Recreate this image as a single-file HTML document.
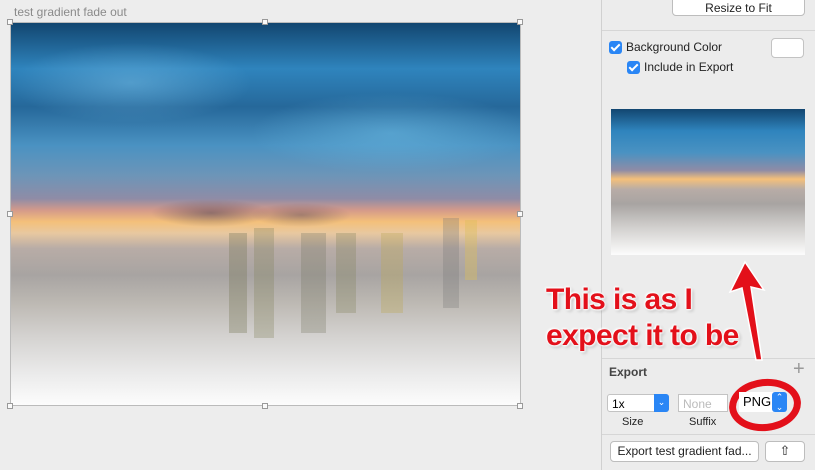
<!DOCTYPE html><html><head><style>
body{margin:0;width:815px;height:470px;overflow:hidden;background:#ededed;font-family:"Liberation Sans",sans-serif;position:relative}
.a{position:absolute}
.h{position:absolute;width:6px;height:6px;background:#fafafa;border:1px solid #999;box-sizing:border-box}
.cb{position:absolute;width:13px;height:13px;border-radius:3px;background:#2a86f5}
.cb:after{content:"";position:absolute;left:4px;top:1px;width:3px;height:7px;border:solid #fff;border-width:0 2px 2px 0;transform:rotate(45deg)}
.t{font-size:12px;color:#222}
.btn{position:absolute;background:#fff;border:1px solid #bdbdbd;border-radius:4px;box-sizing:border-box;font-size:12px;color:#222;text-align:center}
.red{position:absolute;color:#e3101a;font-weight:bold;font-size:30px;letter-spacing:-0.6px;text-shadow:0 0 2px #fff,0 0 2px #fff,1px 1px 2px #fff,-1px -1px 2px #fff,2px 2px 3px rgba(0,0,0,.25)}
</style></head><body>
<div class="a t" style="left:14px;top:5px;color:#8a8a8a;font-size:12px">test gradient fade out</div>
<div class="a" style="left:10px;top:22px;width:511px;height:384px;overflow:hidden;border:1px solid #bbb;box-sizing:border-box;
background:
radial-gradient(ellipse 120px 40px at 120px 60px,rgba(120,190,230,.5),transparent),
radial-gradient(ellipse 140px 40px at 380px 110px,rgba(110,190,230,.5),transparent),
radial-gradient(ellipse 60px 14px at 200px 190px,rgba(70,60,80,.5),transparent),
radial-gradient(ellipse 50px 12px at 290px 192px,rgba(70,60,80,.4),transparent),
linear-gradient(180deg,#124670 0%,#2f84bd 12%,#26689a 22%,#4a92c2 32%,#6d95b8 40%,#8f8ca6 46%,#d49a8a 49%,#f4c07a 52%,#e8c8a0 55%,#b8aca6 59%,#a8a4a2 66%,#bcb8b2 73%,#d4d2d0 82%,#ebebeb 92%,#fcfcfc 100%)">
<div class="a" style="left:218px;top:210px;width:18px;height:100px;background:rgba(120,120,90,.35)"></div>
<div class="a" style="left:243px;top:205px;width:20px;height:110px;background:rgba(130,130,90,.3)"></div>
<div class="a" style="left:290px;top:210px;width:25px;height:100px;background:rgba(120,120,100,.3)"></div>
<div class="a" style="left:325px;top:210px;width:20px;height:80px;background:rgba(130,130,90,.3)"></div>
<div class="a" style="left:370px;top:210px;width:22px;height:80px;background:rgba(190,170,90,.35)"></div>
<div class="a" style="left:432px;top:195px;width:16px;height:90px;background:rgba(120,120,120,.3)"></div>
<div class="a" style="left:454px;top:197px;width:12px;height:60px;background:rgba(220,190,90,.4)"></div>
</div>
<div class="h" style="left:7px;top:19px"></div><div class="h" style="left:262px;top:19px"></div><div class="h" style="left:517px;top:19px"></div>
<div class="h" style="left:7px;top:211px"></div><div class="h" style="left:517px;top:211px"></div>
<div class="h" style="left:7px;top:403px"></div><div class="h" style="left:262px;top:403px"></div><div class="h" style="left:517px;top:403px"></div>
<div class="a" style="left:601px;top:0;width:214px;height:470px;background:#ececec;border-left:1px solid #d0d0d0"></div>
<div class="btn" style="left:672px;top:-4px;width:133px;height:20px;line-height:19px;padding-top:2px">Resize to Fit</div>
<div class="a" style="left:602px;top:30px;width:213px;height:1px;background:#d6d6d6"></div>
<div class="cb" style="left:609px;top:41px"></div><div class="a t" style="left:626px;top:40px">Background Color</div>
<div class="a" style="left:771px;top:38px;width:33px;height:20px;background:#fff;border:1px solid #c3c3c3;border-radius:4px;box-sizing:border-box"></div>
<div class="cb" style="left:627px;top:61px"></div><div class="a t" style="left:644px;top:60px">Include in Export</div>
<div class="a" style="left:611px;top:109px;width:194px;height:146px;background:linear-gradient(180deg,#124670 0%,#2f84bd 15%,#4a92c2 30%,#8f8ca6 42%,#f4c07a 48%,#b8aca6 55%,#a8a4a2 65%,#cfcdcb 80%,#fcfcfc 100%)"></div>
<div class="a" style="left:602px;top:358px;width:213px;height:1px;background:#d6d6d6"></div>
<div class="a t" style="left:609px;top:365px;font-weight:bold;color:#444">Export</div>
<div class="a" style="left:793px;top:358px;font-size:20px;color:#999">+</div>
<div class="a" style="left:607px;top:394px;width:62px;height:18px;background:#fff;border:1px solid #c3c3c3;border-radius:3px;box-sizing:border-box;font-size:12px;padding:2px 4px">1x</div>
<div class="a" style="left:654px;top:394px;width:15px;height:18px;background:#2a86f5;border-radius:0 3px 3px 0;color:#fff;font-size:9px;text-align:center;line-height:16px">⌄</div>
<div class="a" style="left:678px;top:394px;width:50px;height:18px;background:#fff;border:1px solid #c3c3c3;box-sizing:border-box;font-size:12px;color:#bbb;padding:2px 4px">None</div>
<div class="a t" style="left:622px;top:416px;font-size:11px">Size</div>
<div class="a t" style="left:689px;top:416px;font-size:11px">Suffix</div>
<div class="a" style="left:602px;top:434px;width:213px;height:1px;background:#d6d6d6"></div>
<div class="btn" style="left:610px;top:441px;width:149px;height:21px;line-height:19px">Export test gradient fad...</div>
<div class="btn" style="left:765px;top:441px;width:40px;height:21px;font-size:13px;line-height:18px">⇧</div>
<div class="a" style="left:729px;top:379px;width:72px;height:52px;border:7px solid #e3101a;border-radius:50%;box-sizing:border-box;transform:rotate(-6deg)"></div>
<div class="a" style="left:739px;top:392px;width:36px;height:20px;background:#fff;font-size:13px;line-height:20px;padding-left:4px">PNG</div>
<div class="a" style="left:772px;top:392px;width:15px;height:20px;background:#2a86f5;border-radius:3px;color:#fff;font-size:9px;text-align:center;line-height:10px">⌃<br>⌄</div>
<svg class="a" style="left:720px;top:250px" width="60" height="120"><polygon points="25,12 10,42 22,38 36,110 42,110 31,37 44,40" fill="#e3101a" stroke="#fff" stroke-width="1.5"/></svg>
<div class="red" style="left:546px;top:283px">This is as I</div>
<div class="red" style="left:546px;top:319px">expect it to be</div>
</body></html>
